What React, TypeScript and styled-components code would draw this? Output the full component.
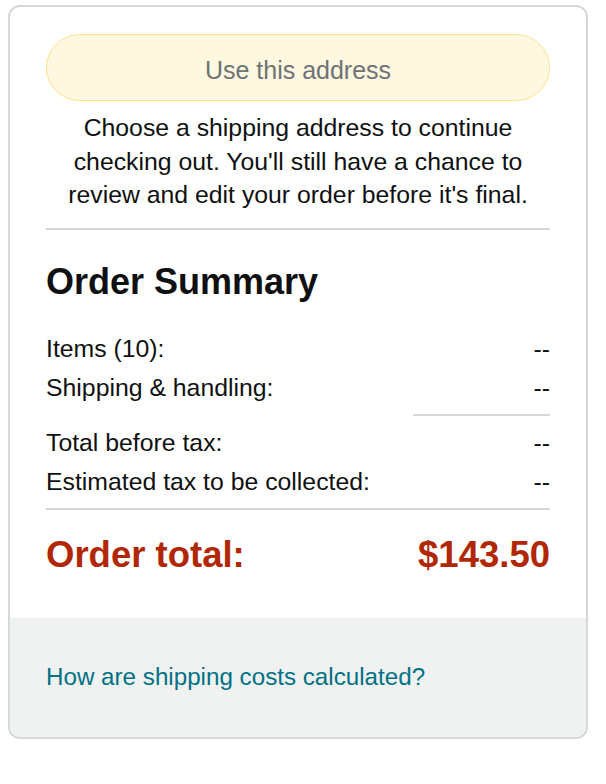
import React from 'react';
import styled, { createGlobalStyle } from 'styled-components';

const GlobalStyle = createGlobalStyle`
  body {
    margin: 0;
    background: #ffffff;
    font-family: 'Liberation Sans', Arial, sans-serif;
    color: #0f1111;
  }
`;

const Page = styled.div`
  padding: 5px 0 0 8px;
`;

const Card = styled.div`
  width: 576px;
  border: 2px solid #d5d9d9;
  border-radius: 12px;
  overflow: hidden;
  background: #ffffff;
`;

const Body = styled.div`
  padding: 27px 36px 41px;
  display: flex;
  flex-direction: column;
`;

const AddressButton = styled.button`
  height: 67px;
  width: 100%;
  padding: 6px 0 0;
  border: 1.5px solid #fce38a;
  border-radius: 34px;
  background: #fef8e1;
  color: #6f7373;
  font-family: inherit;
  font-size: 25px;
  cursor: default;
`;

const Note = styled.p`
  margin: 10px 0 0;
  text-align: center;
  font-size: 24.8px;
  line-height: 33.5px;
`;

const Divider = styled.hr<{ $short?: boolean }>`
  border: none;
  height: 2px;
  background: #d5d9d9;
  margin: 0;
  width: ${(p) => (p.$short ? '137px' : '100%')};
  align-self: flex-end;
`;

const Heading = styled.h2`
  margin: 30px 0 25px;
  font-size: 36px;
  line-height: 44px;
  font-weight: 700;
`;

const Row = styled.div`
  display: flex;
  justify-content: space-between;
  font-size: 24.8px;
  line-height: 39px;
`;

const Group = styled.div`
  display: flex;
  flex-direction: column;
  margin: 7px 0;
`;

const Total = styled.div`
  display: flex;
  justify-content: space-between;
  margin-top: 16px;
  font-size: 36.5px;
  line-height: 44px;
  font-weight: 700;
  color: #b12704;
`;

const Footer = styled.div`
  background: #f0f2f2;
  height: 119px;
  padding: 0 36px;
  display: flex;
  align-items: center;
`;

const HelpLink = styled.a`
  color: #007185;
  font-size: 24.2px;
  text-decoration: none;
`;

const summary = [
  { label: 'Items (10):', value: '--' },
  { label: 'Shipping & handling:', value: '--' },
];

const taxes = [
  { label: 'Total before tax:', value: '--' },
  { label: 'Estimated tax to be collected:', value: '--' },
];

const App = () => {
  return (
    <Page>
      <GlobalStyle />
      <Card>
        <Body>
          <AddressButton disabled>Use this address</AddressButton>
          <Note>
            Choose a shipping address to continue checking out. You'll still
            have a chance to review and edit your order before it's final.
          </Note>
          <Divider style={{ marginTop: 16 }} />
          <Heading>Order Summary</Heading>
          {summary.map((r) => (
            <Row key={r.label}>
              <span>{r.label}</span>
              <span>{r.value}</span>
            </Row>
          ))}
          <Group>
            <Divider $short />
          </Group>
          {taxes.map((r) => (
            <Row key={r.label}>
              <span>{r.label}</span>
              <span>{r.value}</span>
            </Row>
          ))}
          <Group>
            <Divider />
          </Group>
          <Total>
            <span>Order total:</span>
            <span>$143.50</span>
          </Total>
        </Body>
        <Footer>
          <HelpLink href="#">How are shipping costs calculated?</HelpLink>
        </Footer>
      </Card>
    </Page>
  );
};

export default App;
